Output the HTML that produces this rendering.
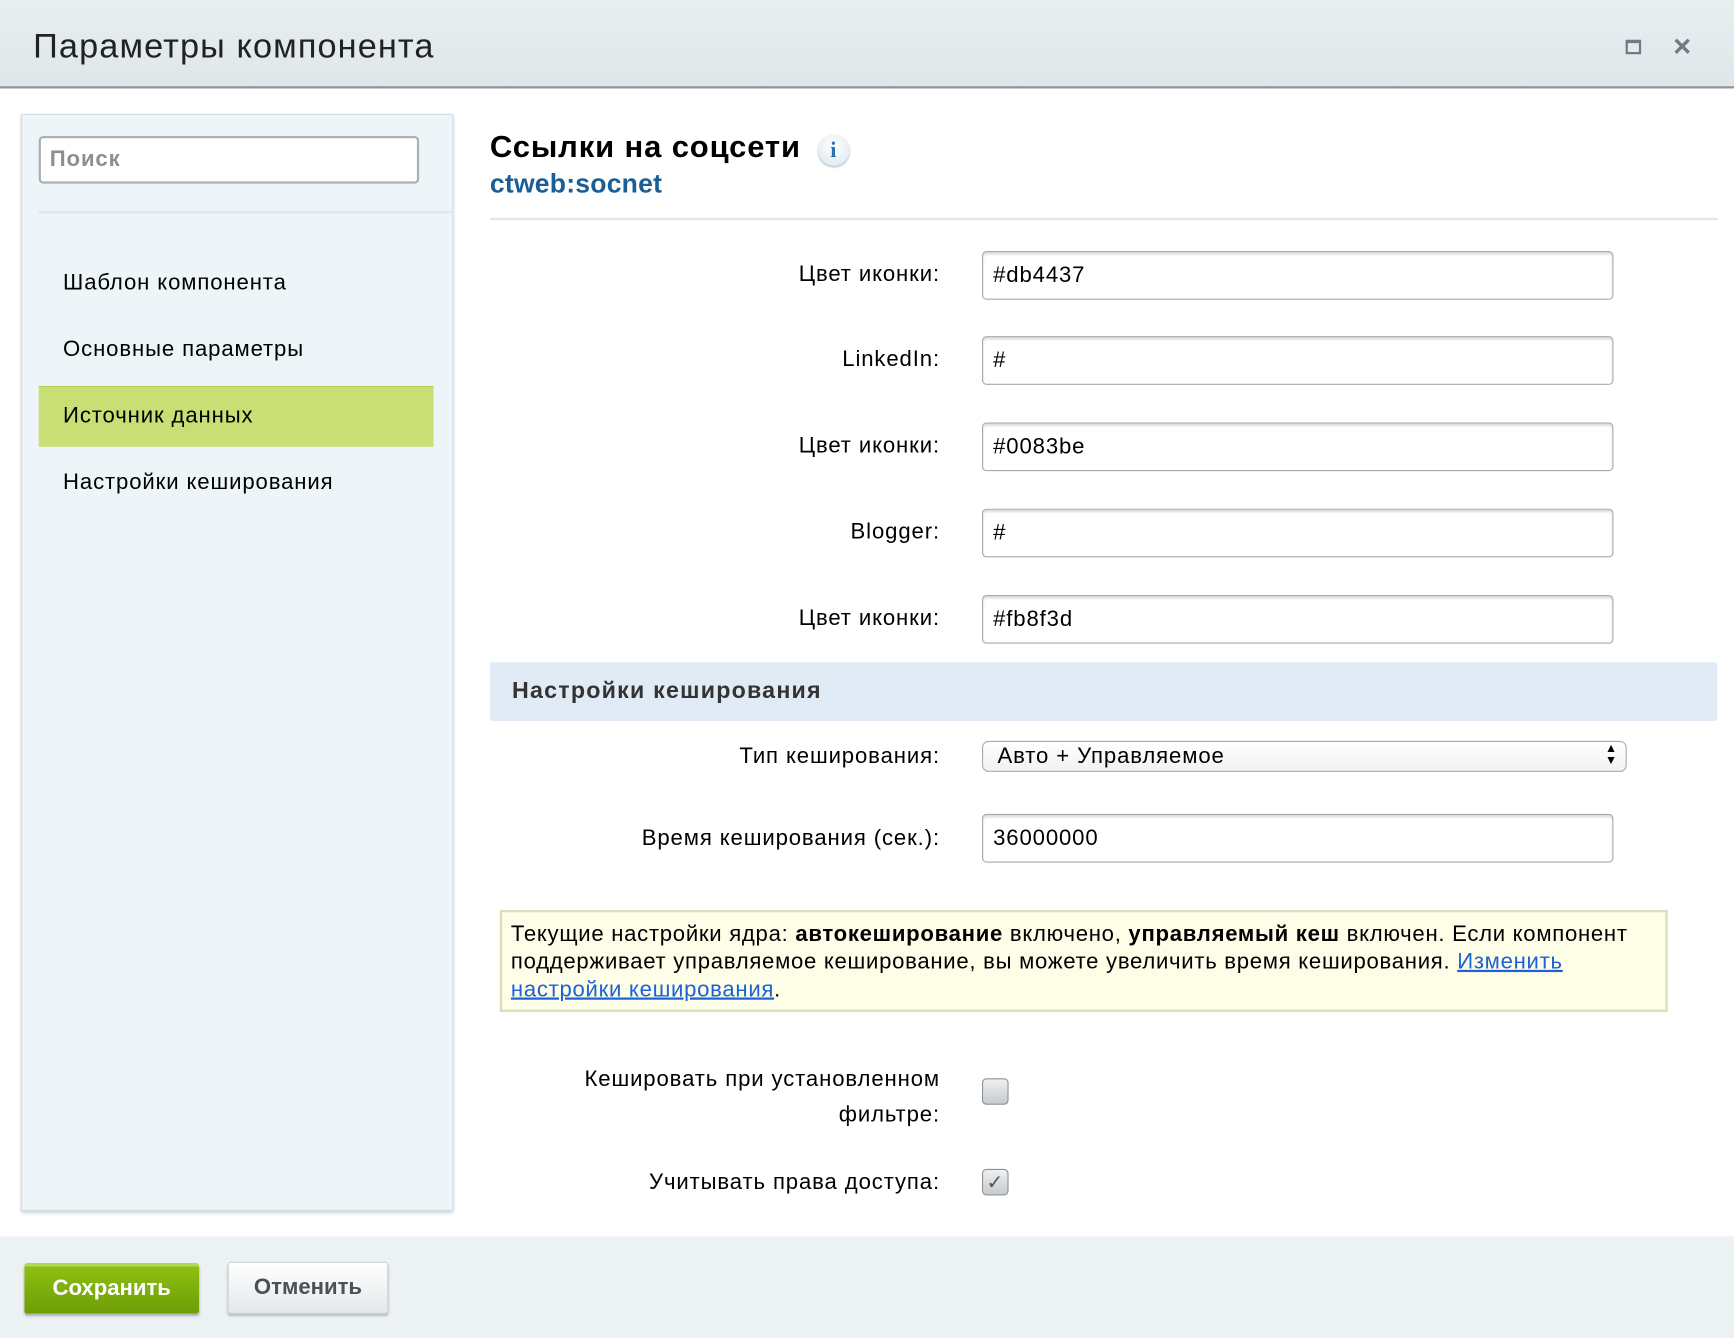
<!DOCTYPE html>
<html><head><meta charset="utf-8"><style>
*{box-sizing:border-box;margin:0;padding:0}
html,body{width:1734px;height:1338px;overflow:hidden;background:#fff}
#w{width:1568px;height:1210px;position:relative;transform:scale(1.10587);transform-origin:0 0;font-family:"Liberation Sans",Arial,sans-serif;color:#000;letter-spacing:0.8px}
.a{position:absolute}
.hdr{left:0;top:0;width:1568px;height:80px;background:linear-gradient(#e8eef0,#dfe7ea);border-bottom:2px solid #8f9396}
.lbl{position:absolute;right:718px;font-size:20px;text-align:right;white-space:nowrap}
.inp{position:absolute;left:888px;width:571px;height:44px;border:1px solid #a5abaf;border-radius:4px;box-shadow:inset 0 2px 2px #d8dcdf;font-size:20px;padding:10px 9px;background:#fff}
.mi{position:absolute;left:57px;font-size:20px}
.cb{position:absolute;left:888px;width:24px;height:24px;border:1px solid #8b9094;border-radius:4px;background:linear-gradient(#eef0f1,#c7cbce)}
</style></head><body><div id="w">
<div class="a hdr"></div>
<div class="a" style="left:30px;top:24px;font-size:31px;color:#222;letter-spacing:1px">Параметры компонента</div>
<div class="a" style="left:1470px;top:36px;width:14px;height:13px;border:2px solid #6f7c84;border-top-width:3px"></div>
<div class="a" style="left:1513px;top:26px;font-size:28px;color:#6f7c84;font-weight:bold">×</div>

<div class="a" style="left:19px;top:103px;width:391px;height:992px;background:#eef5f9;border:1px solid #d3dce1;box-shadow:0 2px 3px #cfd6da"></div>
<div class="a" style="left:35px;top:123px;width:344px;height:43px;background:#fff;border:2px solid #a9b1b6;border-radius:4px;font-size:20px;font-weight:bold;color:#8a8f93;padding:8px 8px">Поиск</div>
<div class="a" style="left:35px;top:191px;width:374px;height:2px;background:#dfe6ea"></div>
<div class="mi" style="top:245px">Шаблон компонента</div>
<div class="mi" style="top:305px">Основные параметры</div>
<div class="a" style="left:35px;top:349px;width:357px;height:55px;background:#c9de74;border-top:1px solid #b8cf5c"></div>
<div class="mi" style="top:365px">Источник данных</div>
<div class="mi" style="top:425px">Настройки кеширования</div>

<div class="a" style="left:443px;top:117px;font-size:28px;font-weight:bold">Ссылки на соцсети</div>
<div class="a" style="left:740px;top:122px;width:28px;height:28px;border-radius:50%;background:radial-gradient(circle at 50% 35%,#fff,#d8e6f0);box-shadow:0 1px 2px #9aa;text-align:center;font:bold 20px 'Liberation Serif',serif;color:#2a6fb5;line-height:28px">i</div>
<div class="a" style="left:443px;top:153px;font-size:24px;font-weight:bold;color:#1b5e96;letter-spacing:0.2px">ctweb:socnet</div>
<div class="a" style="left:443px;top:197px;width:1110px;height:2px;background:#e3e6e8"></div>

<div class="lbl" style="top:237px">Цвет иконки:</div><div class="inp" style="top:227px">#db4437</div>
<div class="lbl" style="top:314px">LinkedIn:</div><div class="inp" style="top:304px">#</div>
<div class="lbl" style="top:392px">Цвет иконки:</div><div class="inp" style="top:382px">#0083be</div>
<div class="lbl" style="top:470px">Blogger:</div><div class="inp" style="top:460px">#</div>
<div class="lbl" style="top:548px">Цвет иконки:</div><div class="inp" style="top:538px">#fb8f3d</div>

<div class="a" style="left:443px;top:599px;width:1110px;height:53px;background:#e0ebf6;border-radius:2px"></div>
<div class="a" style="left:463px;top:613px;font-size:21px;font-weight:bold;color:#333;letter-spacing:1.1px">Настройки кеширования</div>

<div class="lbl" style="top:673px">Тип кеширования:</div>
<div class="a" style="left:888px;top:670px;width:583px;height:28px;border:1px solid #a5abaf;border-radius:6px;background:linear-gradient(#fff,#f1f2f3);font-size:20px;padding:2px 13px">Авто + Управляемое<span style="position:absolute;right:7px;top:1px;font-size:11px;line-height:11px">▲<br>▼</span></div>

<div class="lbl" style="top:747px">Время кеширования (сек.):</div><div class="inp" style="top:736px">36000000</div>

<div class="a" style="left:452px;top:823px;width:1056px;height:92px;background:#fdfde8;border:2px solid #dcdcb8;font-size:20px;line-height:25px;padding:8px 8px;letter-spacing:0.65px">Текущие настройки ядра: <b>автокеширование</b> включено, <b>управляемый кеш</b> включен. Если компонент поддерживает управляемое кеширование, вы можете увеличить время кеширования. <span style="color:#1b62d6;text-decoration:underline">Изменить</span><br><span style="color:#1b62d6;text-decoration:underline">настройки кеширования</span>.</div>

<div class="lbl" style="top:960px;line-height:32px">Кешировать при установленном<br>фильтре:</div>
<div class="cb" style="top:975px"></div>
<div class="lbl" style="top:1058px">Учитывать права доступа:</div>
<div class="cb" style="top:1057px;font-size:18px;color:#555;text-align:center;line-height:22px">✓</div>

<div class="a" style="left:0;top:1118px;width:1568px;height:92px;background:#ecf1f3"></div>
<div class="a" style="left:22px;top:1142px;width:158px;height:46px;border-radius:3px;background:linear-gradient(#8dc013,#6e9c06);border-top:3px solid #b3d94a;box-shadow:0 2px 2px #a9b0b3;color:#fff;font-size:20px;font-weight:bold;text-align:center;line-height:40px;letter-spacing:0">Сохранить</div>
<div class="a" style="left:206px;top:1141px;width:145px;height:47px;border-radius:3px;background:linear-gradient(#fff,#e4e8ea);border:1px solid #d0d5d8;box-shadow:0 2px 2px #b5bcbf;color:#4a5257;font-size:20px;font-weight:bold;text-align:center;line-height:44px;letter-spacing:0">Отменить</div>
</div></body></html>
